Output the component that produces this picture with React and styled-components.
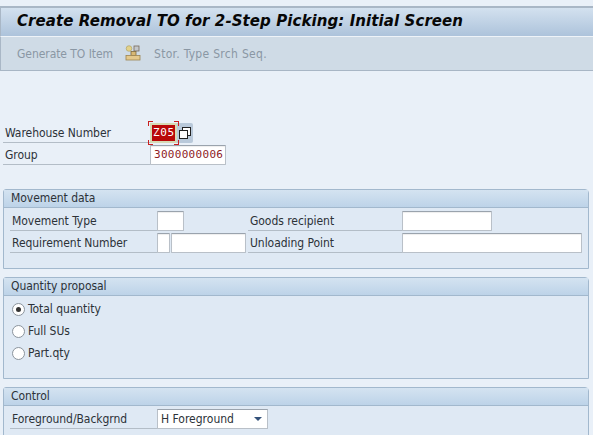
import React from "react";
import styled, { createGlobalStyle } from "styled-components";

const UI = `"DejaVu Sans Condensed", "Noto Sans", sans-serif`;
const Global = createGlobalStyle`
  html, body { margin: 0; padding: 0; }
  body { width: 593px; height: 435px; overflow: hidden; background: #e9f0f8; font-family: ${UI}; }
`;
const Page = styled.div`display: flex; flex-direction: column; height: 435px; overflow: hidden; padding-top: 6px; box-sizing: border-box;`;
const TitleBar = styled.div`
  height: 31px; flex: none; box-sizing: border-box; border-top: 2px solid #a9b7c6; border-bottom: 1px solid #eef3f8; border-left: 1px solid #a9b7c6;
  background: linear-gradient(#d3e1ef, #adc3db); display: flex; align-items: center; padding: 0 0 2px 16px;
`;
const Title = styled.h1`margin: 0; font: italic bold 15px "DejaVu Sans", sans-serif; color: #070707; white-space: nowrap; letter-spacing: 0.08px;`;
const Toolbar = styled.div`
  height: 34px; flex: none; box-sizing: border-box; background: #cfdbe6; border-bottom: 1px solid #a8b6c5; border-left: 1px solid #a9b7c6;
  display: flex; align-items: center; padding-left: 16px; font-size: 12px; color: #8a97a4;
`;
const ToolText = styled.span`white-space: nowrap; letter-spacing: ${p => p.$ls}px;`;
const ToolIcon = styled.svg`width: 16px; height: 16px; margin: 0 13px 2px 12px; flex: none;`;
const Content = styled.div`flex: 1; display: flex; flex-direction: column; padding: 52px 4px 0 3px;`;
const TopFields = styled.div`display: flex; flex-direction: column; gap: 2px; margin-bottom: 24px;`;
const Row = styled.div`display: flex; align-items: stretch; height: 20px;`;
const Label = styled.label`
  width: ${p => p.$w}px; box-sizing: border-box; flex: none; border-bottom: 1px solid #b3bdc7; padding-left: ${p => p.$pl || 2}px;
  font-size: 12px; line-height: 20px; color: #2c3238; white-space: nowrap; letter-spacing: -0.05px;
`;
const Field = styled.div`
  width: ${p => p.$w}px; height: 20px; box-sizing: border-box; flex: none; background: #fff; margin-left: ${p => p.$ml || 0}px;
  border: 1px solid #b9c0c8; border-top-color: #9aa3ad; border-radius: 1px; box-shadow: inset 0 1px 1px #eee;
`;
const MonoField = styled(Field)`
  font: 11px "DejaVu Sans Mono", monospace; color: #8e1b1f; letter-spacing: 0.3px; line-height: 18px; padding-left: 3px; white-space: nowrap; overflow: hidden;
`;
const KeyWrap = styled.div`position: relative; width: 27px; height: 20px; flex: none;`;
const KeyField = styled.div`
  width: 27px; height: 20px; box-sizing: border-box; border: 2px solid #d6d9b4; background: #b90808; color: #fff;
  font: 11px "DejaVu Sans Mono", monospace; letter-spacing: 0.6px; line-height: 15px; padding-left: 1px; overflow: hidden;
`;
const Corner = styled.i`
  position: absolute; width: 4px; height: 4px; border-color: #c9201f; border-style: solid; border-width: 0;
  ${p => p.$t ? "top: -2px;" : "bottom: -2px;"} ${p => p.$l ? "left: -2px;" : "right: -2px;"}
  ${p => p.$t ? "border-top-width: 1px;" : "border-bottom-width: 1px;"} ${p => p.$l ? "border-left-width: 1px;" : "border-right-width: 1px;"}
`;
const HelpBtn = styled.div`
  width: 16px; height: 20px; background: #b9c9da; border-radius: 0 2px 2px 0; display: flex; align-items: center; justify-content: center;
`;
const Box = styled.section`
  height: ${p => p.$h}px; box-sizing: border-box; flex: none; margin-bottom: 8px; background: #dfe9f4;
  border: 1px solid #a2b8cd; border-radius: 3px 4px 0 0; display: flex; flex-direction: column;
`;
const BoxHead = styled.div`
  height: 18px; flex: none; box-sizing: border-box; border-bottom: 1px solid #a2b8cd; background: linear-gradient(#d4e3f1, #bdd3e8);
  padding-left: 7px; font-size: 12px; line-height: 17px; color: #2c3238; letter-spacing: -0.05px;
`;
const BoxBody = styled.div`padding: 3px 0 0 6px; display: flex; flex-direction: column; gap: 2px;`;
const Gap = styled.div`width: ${p => p.$w}px; flex: none;`;
const Radios = styled.div`padding: 3px 0 0 8px; display: flex; flex-direction: column; gap: 2px;`;
const RadioRow = styled.div`height: 20px; display: flex; align-items: center; gap: 3px; font-size: 12px; color: #2c3238; letter-spacing: -0.05px;`;
const RadioDot = styled.span`
  width: 13px; height: 13px; box-sizing: border-box; border: 1px solid #8b949d; border-radius: 50%; background: #fff; display: flex; align-items: center; justify-content: center;
  &::after { content: ""; width: 5px; height: 5px; border-radius: 50%; background: ${p => p.$on ? "#333" : "transparent"}; }
`;
const Select = styled.div`
  width: 111px; height: 20px; box-sizing: border-box; background: #fff; border: 1px solid #b9c0c8; border-top-color: #9aa3ad; display: flex; align-items: center;
  justify-content: space-between; padding: 0 5px 0 3px; font-size: 12px; color: #2c3238;
`;
const Arrow = styled.span`width: 0; height: 0; border-left: 4px solid transparent; border-right: 4px solid transparent; border-top: 4px solid #34527a;`;

export default function App() {
  return (
    <Page>
      <Global />
      <TitleBar><Title>Create Removal TO for 2-Step Picking: Initial Screen</Title></TitleBar>
      <Toolbar>
        <ToolText $ls={-0.06}>Generate TO Item</ToolText>
        <ToolIcon viewBox="0 0 16 16" style={undefined}>
          <circle cx="4" cy="3.5" r="2.8" fill="#e3d28a" stroke="#a99a5c" strokeWidth=".6" />
          <rect x="9" y="1" width="5" height="5" fill="#c3c7cc" stroke="#77695a" strokeWidth=".8" />
          <rect x="6" y="6.5" width="5" height="4" fill="#d8b874" stroke="#806a3c" strokeWidth=".8" />
          <rect x="1" y="10.5" width="14" height="4.5" fill="#e5c98c" stroke="#9c8450" strokeWidth=".8" />
        </ToolIcon>
        <ToolText $ls={0.3}>Stor. Type Srch Seq.</ToolText>
      </Toolbar>
      <Content>
        <TopFields>
          <Row>
            <Label $w={147}>Warehouse Number</Label>
            <KeyWrap>
              <KeyField>Z05</KeyField>
              <Corner $t $l /><Corner $t /><Corner $l /><Corner />
            </KeyWrap>
            <HelpBtn>
              <svg width="12" height="12" viewBox="0 0 12 12">
                <rect x="3.5" y="0.5" width="8" height="8" fill="#fff" stroke="#222" />
                <rect x="0.5" y="3.5" width="8" height="8" fill="#fff" stroke="#222" />
              </svg>
            </HelpBtn>
          </Row>
          <Row>
            <Label $w={147}>Group</Label>
            <MonoField $w={76}>3000000006</MonoField>
          </Row>
        </TopFields>
        <Box $h={80}>
          <BoxHead>Movement data</BoxHead>
          <BoxBody>
            <Row>
              <Label $w={147}>Movement Type</Label>
              <Field $w={27} />
              <Gap $w={64} />
              <Label $w={154}>Goods recipient</Label>
              <Field $w={90} />
            </Row>
            <Row>
              <Label $w={147}>Requirement Number</Label>
              <Field $w={13} />
              <Field $w={75} $ml={1} />
              <Gap $w={2} />
              <Label $w={154}>Unloading Point</Label>
              <Field $w={180} />
            </Row>
          </BoxBody>
        </Box>
        <Box $h={102}>
          <BoxHead>Quantity proposal</BoxHead>
          <Radios>
            <RadioRow><RadioDot $on />Total quantity</RadioRow>
            <RadioRow><RadioDot />Full SUs</RadioRow>
            <RadioRow><RadioDot />Part.qty</RadioRow>
          </Radios>
        </Box>
        <Box $h={60}>
          <BoxHead>Control</BoxHead>
          <BoxBody>
            <Row>
              <Label $w={147}>Foreground/Backgrnd</Label>
              <Select>H Foreground<Arrow /></Select>
            </Row>
          </BoxBody>
        </Box>
      </Content>
    </Page>
  );
}
